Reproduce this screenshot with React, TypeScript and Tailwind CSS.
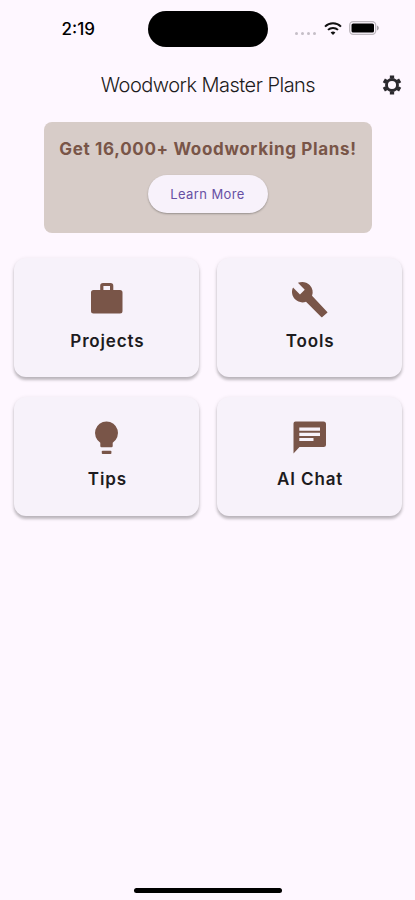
import type { ComponentType } from 'react';

type IconProps = {
  className?: string;
};

type MenuItem = {
  label: string;
  icon: ComponentType<IconProps>;
};

const BriefcaseIcon = ({ className }: IconProps) => (
  <svg className={className} viewBox="0 0 39 39" fill="currentColor">
    <path
      fillRule="evenodd"
      d="M16 3h7.5a2.8 2.8 0 0 1 2.8 2.8V10H33a2.5 2.5 0 0 1 2.5 2.5V31a2.5 2.5 0 0 1-2.5 2.5H6.5A2.5 2.5 0 0 1 4 31V12.5A2.5 2.5 0 0 1 6.5 10h6.700V5.800A2.8 2.8 0 0 1 16 3Zm.4 3v4H23V6Z"
    />
  </svg>
);

const WrenchIcon = ({ className }: IconProps) => (
  <svg className={className} viewBox="-.3 -.1 24.600 24.600" fill="currentColor">
    <path d="m23.200 20.100-9.600-10.200c.9-2.300.4-5-1.500-6.900-2-2-5-2.400-7.400-1.300L9 6 6 9 1.600 4.700C.4 7.100.9 10.100 2.900 12.100c1.900 1.900 4.600 2.400 6.900 1.500l9.600 9.700c.2.200.5.2.7 0l3.100-2.700c.2-.2.2-.4 0-.500Z" />
  </svg>
);

const BulbIcon = ({ className }: IconProps) => (
  <svg className={className} viewBox="0 0 39 39" fill="currentColor">
    <path d="M19.5 3.5a11.5 11.5 0 0 1 6.2 21.200V28a1.200 1.200 0 0 1-1.200 1.200h-10a1.200 1.200 0 0 1-1.200-1.200v-3.300a11.5 11.5 0 0 1 6.200-21.200Z" />
    <rect x="14.800" y="32.700" width="9.600" height="3.300" rx=".8" />
  </svg>
);

const ChatIcon = ({ className }: IconProps) => (
  <svg className={className} viewBox="0 0 39 39">
    <path
      fill="currentColor"
      d="M5.500 3.500h28a2.500 2.500 0 0 1 2.500 2.500v20.500a2.500 2.500 0 0 1-2.500 2.500H9.500L3.500 35.500V5.500a2 2 0 0 1 2-2Z"
    />
    <path stroke="#f7f2fa" strokeWidth="3.200" d="M9.300 11.200h20.700M9.300 16.300h20.700M9.300 21.500h14.200" />
  </svg>
);

const GearIcon = ({ className }: IconProps) => (
  <svg className={className} viewBox="-11 -11 22 22" fill="none" stroke="currentColor">
    <circle r="5.500" strokeWidth="2.900" />
    <path
      strokeWidth="4.300"
      d="M0-9.400v3M0 9.400v-3M8.140-4.700l-2.600 1.500M-8.140-4.700l2.600 1.500M8.140 4.700l-2.600-1.500M-8.140 4.700l2.600-1.500"
    />
  </svg>
);

const menuItems: MenuItem[] = [
  { label: 'Projects', icon: BriefcaseIcon },
  { label: 'Tools', icon: WrenchIcon },
  { label: 'Tips', icon: BulbIcon },
  { label: 'AI Chat', icon: ChatIcon },
];

const StatusBar = () => (
  <div className="flex h-[58px] items-start pt-[11px]">
    <div className="w-[147.5px] pt-[6px] pl-[61.5px] text-[17px] leading-6 font-medium">2:19</div>
    <div className="h-[35.5px] w-[120.5px] rounded-full bg-black" />
    <div className="flex h-[35px] flex-1 items-center pl-[27px]">
      <div className="mt-[9px] flex gap-[3px]">
        <span className="size-[3px] rounded-full bg-[#c5bec7]" />
        <span className="size-[3px] rounded-full bg-[#c5bec7]" />
        <span className="size-[3px] rounded-full bg-[#c5bec7]" />
        <span className="size-[3px] rounded-full bg-[#c5bec7]" />
      </div>
      <svg className="-mt-px ml-[8px] h-[13px] w-[18px]" viewBox="0 0 18 13" fill="none" stroke="#111" strokeWidth="2">
        <path d="M1 4.600a11.400 11.400 0 0 1 16 0" />
        <path d="M4 7.900a7.200 7.200 0 0 1 10 0" />
        <path d="M9 13 6.600 10.600a3.400 3.400 0 0 1 4.800 0Z" fill="#111" stroke="none" />
      </svg>
      <svg className="-mt-px ml-[7px] h-[14px] w-[31px]" viewBox="0 0 31 14">
        <rect x=".7" y=".7" width="26" height="12.600" rx="3.500" fill="none" stroke="#bdb7be" strokeWidth="1.300" />
        <rect x="2.500" y="2.500" width="22.500" height="9" rx="1.600" fill="#000" />
        <path d="M28 4.500c2.400.7 2.400 4.300 0 5Z" fill="#aaa4ab" />
      </svg>
    </div>
  </div>
);

const Header = () => (
  <div className="flex h-[54px] items-center">
    <h1 className="flex-1 pl-[35px] text-center text-[20px] leading-7 font-light tracking-[-0.52px] whitespace-nowrap text-[#1d1b20]">
      Woodwork Master Plans
    </h1>
    <button className="mr-[12px] text-[#2b292e]" aria-label="Settings">
      <GearIcon className="size-[22px]" />
    </button>
  </div>
);

const Banner = () => (
  <div className="mx-auto mt-[9.5px] flex h-[111.5px] w-[328px] flex-col items-center rounded-[8px] bg-[#d7ccc8] pt-[15.5px]">
    <p className="pl-px text-[17px] leading-6 font-bold tracking-[0.66px] whitespace-nowrap text-[#795548]">
      Get 16,000+ Woodworking Plans!
    </p>
    <button className="mt-[14px] h-[38px] w-[120px] rounded-full bg-[#f8f2fb] pt-px text-[13px] tracking-[0.4px] text-[#6750a4] shadow-[0_1px_2px_rgba(0,0,0,0.3)]">
      Learn More
    </button>
  </div>
);

const MenuCard = ({ label, icon: Icon }: MenuItem) => (
  <button className="flex h-[119px] flex-col items-center rounded-[12px] bg-[#f7f2fa] pt-[21.5px] shadow-[0_3px_3px_rgba(0,0,0,0.22),0_1px_4px_rgba(0,0,0,0.1)]">
    <Icon className="size-[39px] text-[#795548]" />
    <span className="mt-[10px] pl-[1.5px] text-[17px] leading-6 font-semibold tracking-[0.85px] text-[#1d1b20]">{label}</span>
  </button>
);

export default function App() {
  return (
    <div className="flex h-[900px] w-[415px] flex-col bg-[#fef7ff] font-['Inter','Liberation_Sans',sans-serif] text-black">
      <StatusBar />
      <Header />
      <Banner />
      <div className="mr-[13px] ml-[14px] mt-[25px] grid grid-cols-2 gap-x-[17.5px] gap-y-[19.5px]">
        {menuItems.map((item) => (
          <MenuCard key={item.label} {...item} />
        ))}
      </div>
      <div className="mx-auto mt-auto mb-[7.5px] h-[4.5px] w-[148px] rounded-full bg-black" />
    </div>
  );
}
